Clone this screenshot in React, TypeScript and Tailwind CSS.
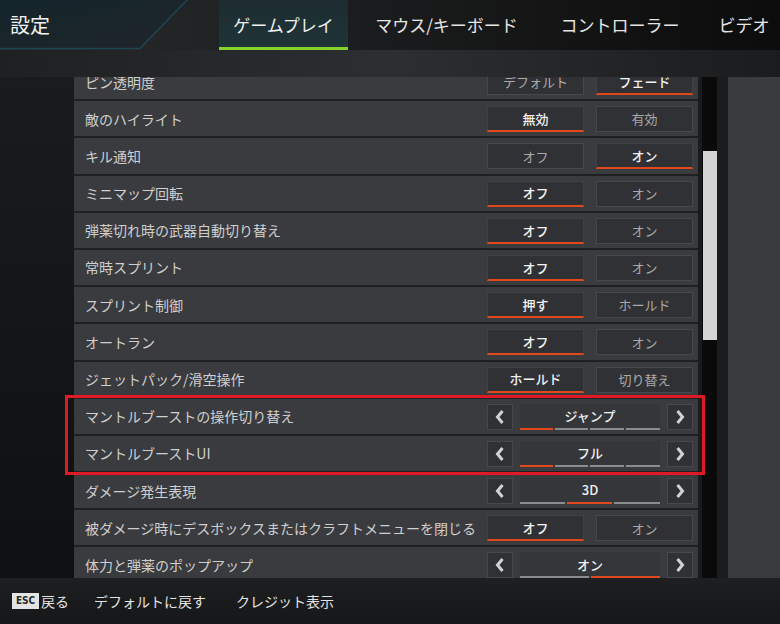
import React from "react";

type Row =
  | { label: string; kind: "toggle"; options: [string, string]; sel: number }
  | { label: string; kind: "cycle"; value: string; count: number; sel: number };

const rows: Row[] = [
  { label: "ピン透明度", kind: "toggle", options: ["デフォルト", "フェード"], sel: 1 },
  { label: "敵のハイライト", kind: "toggle", options: ["無効", "有効"], sel: 0 },
  { label: "キル通知", kind: "toggle", options: ["オフ", "オン"], sel: 1 },
  { label: "ミニマップ回転", kind: "toggle", options: ["オフ", "オン"], sel: 0 },
  { label: "弾薬切れ時の武器自動切り替え", kind: "toggle", options: ["オフ", "オン"], sel: 0 },
  { label: "常時スプリント", kind: "toggle", options: ["オフ", "オン"], sel: 0 },
  { label: "スプリント制御", kind: "toggle", options: ["押す", "ホールド"], sel: 0 },
  { label: "オートラン", kind: "toggle", options: ["オフ", "オン"], sel: 0 },
  { label: "ジェットパック/滑空操作", kind: "toggle", options: ["ホールド", "切り替え"], sel: 0 },
  { label: "マントルブーストの操作切り替え", kind: "cycle", value: "ジャンプ", count: 4, sel: 0 },
  { label: "マントルブーストUI", kind: "cycle", value: "フル", count: 4, sel: 0 },
  { label: "ダメージ発生表現", kind: "cycle", value: "3D", count: 3, sel: 1 },
  { label: "被ダメージ時にデスボックスまたはクラフトメニューを閉じる", kind: "toggle", options: ["オフ", "オン"], sel: 0 },
  { label: "体力と弾薬のポップアップ", kind: "cycle", value: "オン", count: 2, sel: 1 },
];

// fixed tab boxes so the labels land where the game's menu puts them
const tabs = [
  { label: "ゲームプレイ", w: "w-[129px]" },
  { label: "マウス/キーボード", w: "w-[197px]" },
  { label: "コントローラー", w: "w-[150px]" },
  { label: "ビデオ", w: "w-[98px]" },
];

// segment widths per option count (140px bar, 2px gaps)
const segWidths: Record<number, string[]> = {
  2: ["w-[69px]", "w-[69px]"],
  3: ["w-[45px]", "w-[45px]", "w-[46px]"],
  4: ["w-[33px]", "w-[33px]", "w-[34px]", "w-[34px]"],
};

function Chevron({ dir }: { dir: "left" | "right" }) {
  return (
    <svg width="10" height="16" viewBox="0 0 10 16">
      <polyline
        points={dir === "left" ? "7.5,2 2.5,8 7.5,14" : "2.5,2 7.5,8 2.5,14"}
        fill="none"
        stroke="#d2d2d2"
        strokeWidth="3"
        strokeLinejoin="miter"
      />
    </svg>
  );
}

function ToggleControl({ options, sel }: { options: [string, string]; sel: number }) {
  return (
    <div className="flex gap-[12px]">
      {options.map((o, i) => (
        <div
          key={o}
          className={
            i === sel
              ? "w-[97px] h-[26px] flex items-center justify-center bg-[#303135] border border-[#404145] border-b-2 border-b-[#e2481d] text-[13px] text-[#f2f2f2] font-medium"
              : "w-[97px] h-[26px] flex items-center justify-center bg-[#303135] border border-[#47484c] text-[13px] text-[#a9a9a9]"
          }
        >
          {o}
        </div>
      ))}
    </div>
  );
}

function CycleControl({ value, count, sel }: { value: string; count: number; sel: number }) {
  return (
    <div className="flex items-center gap-[7px]">
      <div className="w-[26px] h-[26px] flex items-center justify-center bg-[#303135] border border-[#47484c]">
        <Chevron dir="left" />
      </div>
      <div className="w-[140px] h-[26px] flex flex-col">
        <div className="flex-1 flex items-center justify-center bg-[#35363a] text-[13px] text-[#f0f0f0] font-medium">
          {value}
        </div>
        <div className="h-[2px] flex gap-[2px]">
          {segWidths[count].map((w, i) => (
            <div key={i} className={i === sel ? `${w} bg-[#e2481d]` : `${w} bg-[#8c8c8c]`} />
          ))}
        </div>
      </div>
      <div className="w-[26px] h-[26px] flex items-center justify-center bg-[#303135] border border-[#47484c]">
        <Chevron dir="right" />
      </div>
    </div>
  );
}

export default function App() {
  return (
    <div
      className="w-[780px] h-[624px] flex flex-col bg-[#141516] overflow-hidden relative"
      style={{ fontFamily: '"Noto Sans CJK JP", "Noto Sans", sans-serif' }}
    >
      {/* Header */}
      <div className="h-[50px] shrink-0 relative flex bg-gradient-to-r from-[#2a2b2d] via-[#1a1b1c] to-[#0c0c0c]">
        <svg className="absolute left-0 top-0" width="200" height="50" viewBox="0 0 200 50">
          <defs>
            <linearGradient id="hd" x1="0" y1="0" x2="1" y2="1">
              <stop offset="0" stopColor="#13252b" />
              <stop offset="1" stopColor="#202529" />
            </linearGradient>
          </defs>
          <polygon points="0,0 187,0 140,48 0,48" fill="url(#hd)" />
          <polyline points="0,48.5 140,48.5 187,0" fill="none" stroke="#1d4652" strokeWidth="1.5" />
        </svg>
        <div className="relative w-[219px] shrink-0 pl-[10px] flex items-center text-[20px] text-[#f2f2f2]">設定</div>
        <div className="relative flex">
          {tabs.map((t, i) => (
            <div
              key={t.label}
              className={
                i === 0
                  ? `${t.w} shrink-0 relative flex items-center justify-center whitespace-nowrap text-[17px] text-[#f0f0f0] bg-gradient-to-b from-[#1d2c30] to-[#1f3539]`
                  : `${t.w} shrink-0 flex items-center justify-center whitespace-nowrap text-[17px] text-[#e6e6e6]`
              }
            >
              {t.label}
              {i === 0 && <div className="absolute left-0 right-0 bottom-0 h-[3px] bg-[#86d42a]" />}
            </div>
          ))}
        </div>
      </div>

      {/* Strip under header */}
      <div className="h-[27px] shrink-0 bg-gradient-to-r from-[#1f2022] via-[#2d2e30] to-[#1b1c1e]" />

      {/* Main */}
      <div className="flex-1 flex min-h-0">
        <div className="w-[74px] bg-gradient-to-b from-[#1a1b1d] to-[#0f1011]" />
        <div className="w-[624px] overflow-hidden bg-[#1f2022]">
          <div className="-mt-[13px] flex flex-col">
            {rows.map((r) => (
              <div
                key={r.label}
                className="h-[35.2px] mb-[2px] shrink-0 flex items-start justify-between pl-[11px] pr-[5px] pt-[5px] bg-[#3a3b3f]"
              >
                <span className="h-[26px] flex items-center text-[14px] text-[#cfcfcf] whitespace-nowrap">{r.label}</span>
                {r.kind === "toggle" ? (
                  <ToggleControl options={r.options} sel={r.sel} />
                ) : (
                  <CycleControl value={r.value} count={r.count} sel={r.sel} />
                )}
              </div>
            ))}
          </div>
        </div>
        <div className="w-[4px] bg-[#1a1b1d]" />
        <div className="w-[15px] bg-[#0a0a0a] pt-[74px] pl-[1px]">
          <div className="h-[189px] bg-[#d4d4d4]" />
        </div>
        <div className="w-[11px] bg-[#1b1c1e]" />
        <div className="w-[52px] bg-[#3a3b3e]" />
      </div>

      {/* Footer */}
      <div className="h-[46px] shrink-0 flex items-center pl-[12px] bg-gradient-to-b from-[#1e1f21] to-[#161718] text-[14px] text-[#e2e2e2]">
        <span
          className="h-[16px] w-[27px] flex items-center justify-center bg-[#e4e4e4] text-[#2a2a2a] text-[10px] font-bold leading-none"
          style={{ fontFamily: '"DejaVu Sans Condensed", "DejaVu Sans", sans-serif' }}
        >
          ESC
        </span>
        <span className="ml-[2px]">戻る</span>
        <span className="ml-[25px]">デフォルトに戻す</span>
        <span className="ml-[30px]">クレジット表示</span>
      </div>

      {/* Highlight box */}
      <div className="absolute left-[65px] top-[395px] w-[640px] h-[80px] border-[3px] border-[#e01a24] pointer-events-none" />
    </div>
  );
}
